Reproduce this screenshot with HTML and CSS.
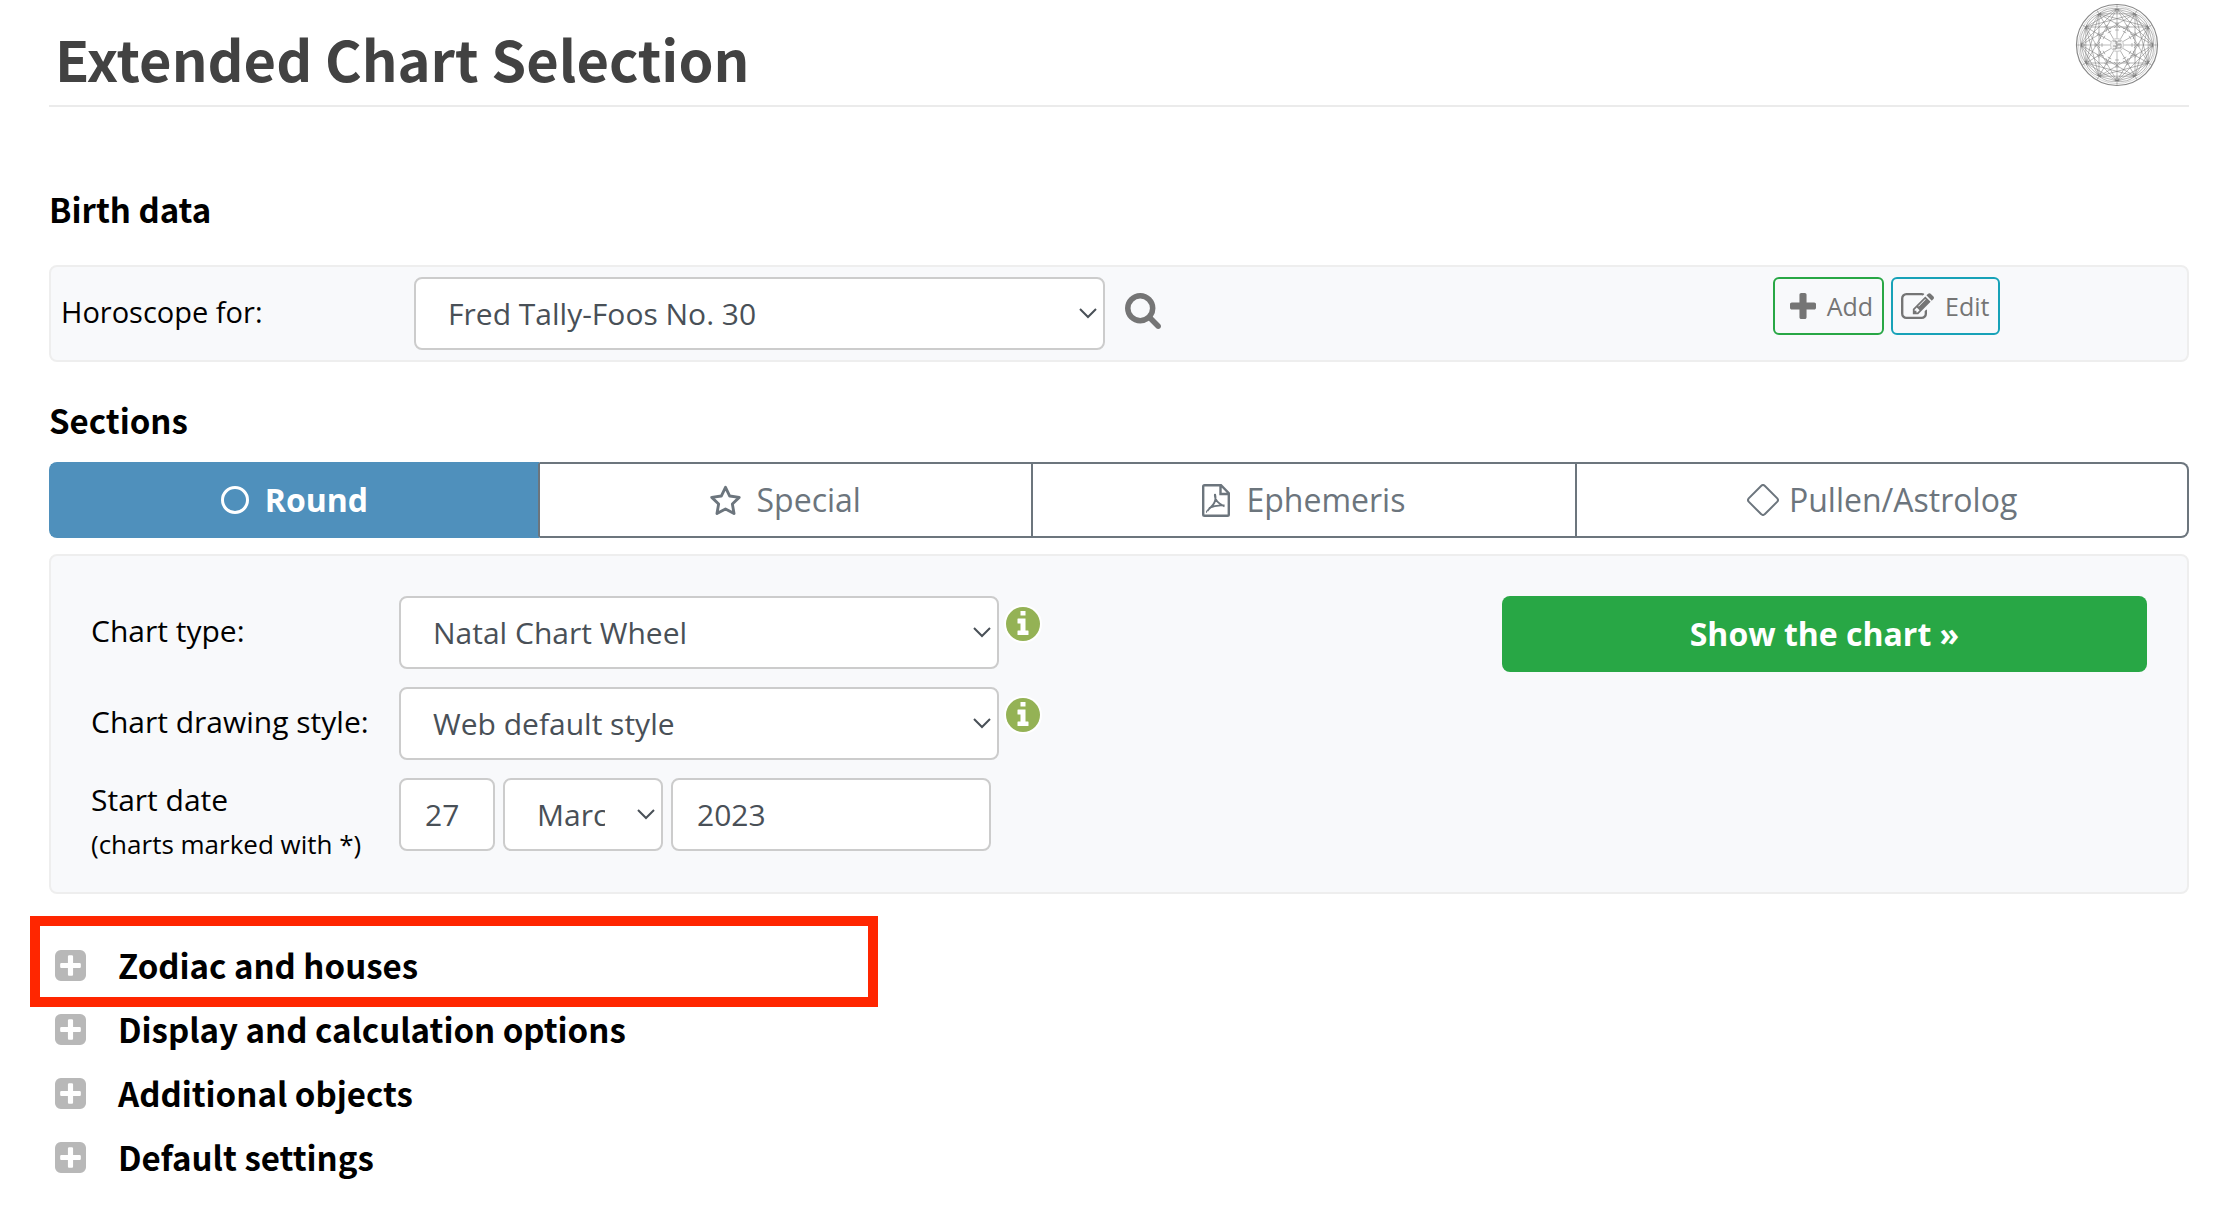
FILE: index.html
```html
<!DOCTYPE html>
<html lang="en">
<head>
<meta charset="utf-8">
<meta name="viewport" content="width=device-width, initial-scale=1">
<title>Extended Chart Selection</title>
<link rel="stylesheet" href="styles.css">
</head>
<body>
<svg class="sprite" aria-hidden="true">
  <symbol id="chevron" viewBox="0 0 18 11"><path d="M1 1l8 8 8-8" fill="none" stroke="currentColor" stroke-width="2"/></symbol>
  <symbol id="info" viewBox="0 0 38 38">
    <circle cx="19" cy="19" r="19" fill="#fff"/>
    <circle cx="19" cy="19" r="17" fill="#94b255"/>
    <path fill="#fff" d="M16.500 6h5v4.500h-5zM13.500 13.500h8v12h2.500q.5 0 .5.500v3.500q0 .5-.5.500h-10q-.5 0-.5-.5v-3.500q0-.5.5-.5h2.500v-7h-2.500q-.5 0-.5-.5v-4q0-.5.5-.5z"/>
  </symbol>
  <symbol id="plus-square" viewBox="0 0 1536 1536"><path fill="currentColor" d="M1280 832V704q0-26-19-45t-45-19H896V320q0-26-19-45t-45-19H704q-26 0-45 19t-19 45v320H320q-26 0-45 19t-19 45v128q0 26 19 45t45 19h320v320q0 26 19 45t45 19h128q26 0 45-19t19-45V896h320q26 0 45-19t19-45zm256-544v960q0 119-84.500 203.500T1248 1536H288q-119 0-203.500-84.500T0 1248V288Q0 169 84.500 84.500T288 0h960q119 0 203.500 84.500T1536 288z"/></symbol>
</svg>
<main class="page">
  <header class="page-header">
    <h1 class="page-title">Extended Chart Selection</h1>
    <svg class="logo" viewBox="-42 -42 84 84" fill="none" stroke="#777" stroke-width=".5" role="img" aria-label="Horoscope wheel">
      <defs>
        <g id="spoke">
          <path d="M0-40V-7M0-36L31.200 18M0-36L36 0M0-36L31.200-18M0-36L18-31.200M0-36Q10-38 18-31.200M-2-37L0-32 2-37M-2-22h4M-2-15h4M0-20l3 3M0-20l-3 3"/>
        </g>
      </defs>
      <circle r="40.500" stroke="#888" stroke-width="1.200"/>
      <circle r="38.500" stroke="#aaa"/>
      <use href="#spoke"/><use href="#spoke" transform="rotate(30)"/><use href="#spoke" transform="rotate(60)"/><use href="#spoke" transform="rotate(90)"/><use href="#spoke" transform="rotate(120)"/><use href="#spoke" transform="rotate(150)"/><use href="#spoke" transform="rotate(180)"/><use href="#spoke" transform="rotate(210)"/><use href="#spoke" transform="rotate(240)"/><use href="#spoke" transform="rotate(270)"/><use href="#spoke" transform="rotate(300)"/><use href="#spoke" transform="rotate(330)"/>
      <circle r="6.500" fill="#f2f2f2" stroke="#999"/>
      <path d="M-4-4h3v3M1-4h3M1-1h3v4H1M-4 1h3v3h-3M-1 0h4M0-4v8" stroke="#777" stroke-width=".7"/>
    </svg>
  </header>

  <h2 class="heading">Birth data</h2>
  <section class="panel birth">
    <label class="birth-label" for="person">Horoscope for:</label>
    <div class="birth-person">
      <span class="select-box person">
        <select class="control" id="person"><option>Fred Tally-Foos No. 30</option></select>
        <svg class="chevron"><use href="#chevron"/></svg>
      </span>
      <button class="search" type="button" aria-label="Search">
        <svg class="search-icon" viewBox="0 0 1664 1664"><path fill="currentColor" d="M1152 704q0-185-131.500-316.500T704 256 387.500 387.500 256 704t131.500 316.500T704 1152t316.500-131.500T1152 704zm512 832q0 52-38 90t-90 38q-54 0-90-38l-343-342q-179 124-399 124-143 0-273.500-55.500t-225-150-150-225T0 704t55.500-273.500 150-225 225-150T704 0t273.500 55.500 225 150 150 225T1408 704q0 220-124 399l343 343q37 37 37 90z"/></svg>
      </button>
    </div>
    <div class="birth-actions">
      <button class="small-button add" type="button"><svg class="plus-icon" viewBox="0 0 1408 1408"><path fill="currentColor" d="M1408 608v192q0 40-28 68t-68 28H896v416q0 40-28 68t-68 28H608q-40 0-68-28t-28-68V896H96q-40 0-68-28t-28-68V608q0-40 28-68t68-28h416V96q0-40 28-68t68-28h192q40 0 68 28t28 68v416h416q40 0 68 28t28 68z"/></svg>Add</button>
      <button class="small-button edit" type="button"><svg class="edit-icon" viewBox="0 0 1784 1408"><path fill="currentColor" d="M888 1056l116-116-152-152-116 116v56h96v96h56zm440-720q-16-16-33 1L945 687q-17 17-1 33t33-1l350-350q17-17 1-33zm80 594v190q0 119-84.500 203.500T1120 1408H288q-119 0-203.500-84.500T0 1120V288Q0 169 84.500 84.500T288 0h832q63 0 117 25 15 7 18 23 3 17-9 29l-49 49q-14 14-32 8-23-6-45-6H288q-66 0-113 47t-47 113v832q0 66 47 113t113 47h832q66 0 113-47t47-113V994q0-13 9-22l64-64q15-15 35-7t20 29zm-96-738l288 288-672 672H640V864zm444 132l-92 92-288-288 92-92q28-28 68-28t68 28l152 152q28 28 28 68t-28 68z"/></svg>Edit</button>
    </div>
  </section>

  <h2 class="heading">Sections</h2>
  <nav class="tabs">
    <button class="tab active" type="button"><svg class="tab-icon" viewBox="0 0 28 28"><circle cx="14" cy="14" r="12.500" fill="none" stroke="currentColor" stroke-width="3"/></svg>Round</button>
    <button class="tab" type="button"><svg class="tab-icon star" viewBox="1 1 28 27"><path d="M15 3l3.800 7.900 8.600 1.200-6.200 6 1.500 8.600L15 22.600l-7.700 4.100 1.500-8.600-6.200-6 8.600-1.200z" fill="none" stroke="currentColor" stroke-width="2.600" stroke-linejoin="round"/></svg>Special</button>
    <button class="tab" type="button"><svg class="tab-icon pdf" viewBox="0 0 28 33"><path d="M2.500 1.200h16.500l7.800 8v21.300q0 1.300-1.300 1.300h-23q-1.300 0-1.300-1.300v-28q0-1.300 1.300-1.300zM18.500 1.500v8.500h8" fill="none" stroke="currentColor" stroke-width="2.400"/><path d="M13 10q-1.500 7 9.500 12.500M13 10q2 7-3.500 12.500T5 28M7 24q7-3.500 15.500-2.500" fill="none" stroke="currentColor" stroke-width="1.800"/></svg>Ephemeris</button>
    <button class="tab" type="button"><svg class="tab-icon diamond" viewBox="0 0 32 32"><path d="M14.300 1.700q1.700-1.400 3.400 0l12.600 12.600q1.400 1.700 0 3.400L17.700 30.300q-1.700 1.400-3.400 0L1.700 17.700q-1.400-1.700 0-3.400z" fill="none" stroke="currentColor" stroke-width="2"/></svg>Pullen/Astrolog</button>
  </nav>

  <form class="panel chart-form">
    <div class="fields">
      <label for="type">Chart type:</label>
      <div class="field">
        <span class="select-box wide"><select class="control" id="type"><option>Natal Chart Wheel</option></select><svg class="chevron"><use href="#chevron"/></svg></span>
        <button class="info" type="button" aria-label="About chart types"><svg class="info-icon"><use href="#info"/></svg></button>
      </div>
      <label for="style">Chart drawing style:</label>
      <div class="field">
        <span class="select-box wide"><select class="control" id="style"><option>Web default style</option></select><svg class="chevron"><use href="#chevron"/></svg></span>
        <button class="info" type="button" aria-label="About drawing styles"><svg class="info-icon"><use href="#info"/></svg></button>
      </div>
      <label class="date-label" for="day">Start date<small class="note">(charts marked with *)</small></label>
      <div class="field date">
        <input class="control day" id="day" type="text" value="27">
        <span class="select-box month"><select class="control" aria-label="Month"><option>March</option></select><svg class="chevron"><use href="#chevron"/></svg></span>
        <input class="control year" type="text" value="2023" aria-label="Year">
      </div>
    </div>
    <button class="submit" type="submit">Show the chart »</button>
  </form>

  <div class="options">
    <h2 class="option highlighted"><button class="option-button" type="button"><svg class="option-icon"><use href="#plus-square"/></svg>Zodiac and houses</button></h2>
    <h2 class="option"><button class="option-button" type="button"><svg class="option-icon"><use href="#plus-square"/></svg>Display and calculation options</button></h2>
    <h2 class="option"><button class="option-button" type="button"><svg class="option-icon"><use href="#plus-square"/></svg>Additional objects</button></h2>
    <h2 class="option"><button class="option-button" type="button"><svg class="option-icon"><use href="#plus-square"/></svg>Default settings</button></h2>
  </div>
</main>
</body>
</html>
```
FILE: styles.css
```css
*,
*::after {
  box-sizing: border-box;
}

body {
  margin: 0;
  background: #fff;
  color: #000;
  font: 30px/44px "Open Sans", sans-serif;
}

button,
select,
input {
  margin: 0;
  font: inherit;
}

button {
  padding: 0;
  border: 0;
  background: none;
  color: inherit;
  cursor: pointer;
}

svg {
  display: block;
  flex: none;
}

.sprite {
  position: absolute;
  width: 0;
  height: 0;
}

.page {
  padding: 0 25px 20px 49px;
}

.page-header {
  display: flex;
  justify-content: space-between;
  align-items: flex-start;
  height: 107px;
  padding: 3px 30px 0 6px;
  border-bottom: 2px solid #ebebeb;
}

.page-title,
.heading,
.option {
  margin: 0;
  font-family: "Noto Sans CJK SC", sans-serif;
  font-weight: 700;
}

.page-title {
  padding-top: 15px;
  color: #424242;
  font-size: 56px;
  line-height: 80px;
}

.logo {
  width: 84px;
  height: 84px;
}

.heading {
  font-size: 33px;
  line-height: 48px;
}

.page-header + .heading {
  padding: 78px 0 32px;
}

.panel {
  border: 2px solid #eee;
  border-radius: 8px;
  background: #f8f9fb;
}

.birth {
  display: grid;
  grid-template-columns: 17% 1fr 19.4%;
  padding: 10px 0;
}

.birth-label {
  padding: 13px 0 0 10px;
  font-size: 29px;
}

.birth-person {
  display: flex;
  gap: 20px;
}

.select-box {
  position: relative;
  display: block;
}

.control {
  display: block;
  width: 100%;
  height: 73px;
  padding: 0 24px;
  border: 2px solid #ccc;
  border-radius: 8px;
  background: #fff;
  color: #495057;
  font-size: 30px;
  appearance: none;
}

select.control {
  padding: 0 56px 0 32px;
}

.chevron {
  position: absolute;
  top: 31px;
  right: 8px;
  width: 18px;
  height: 11px;
  color: #495057;
  pointer-events: none;
}

.person {
  width: 691px;
}

.search {
  align-self: flex-start;
  padding-top: 16px;
  color: #757575;
}

.search-icon {
  width: 36px;
  height: 36px;
}

.birth-actions {
  display: flex;
  align-items: flex-start;
  gap: 7px;
}

.small-button {
  display: flex;
  align-items: center;
  height: 58px;
  padding: 0 9px;
  border: 2px solid #28a745;
  border-radius: 6px;
  color: #757575;
  font-size: 25px;
}

.add {
  gap: 11px;
  padding-left: 15px;
}

.edit {
  gap: 11px;
  padding-left: 8px;
  border-color: #17a2b8;
}

.plus-icon {
  width: 26px;
  height: 26px;
}

.edit-icon {
  width: 33px;
  height: 26px;
}

.panel + .heading {
  padding: 34px 0 18px;
}

.tabs {
  display: flex;
  margin-bottom: 16px;
}

.tab {
  display: flex;
  flex: 1 1 auto;
  justify-content: center;
  align-items: center;
  gap: 16px;
  height: 76px;
  border: 2px solid #6c757d;
  border-left: 0;
  color: #6c757d;
  font-size: 32px;
}

.tab:last-child {
  gap: 10px;
  border-radius: 0 8px 8px 0;
}

.tab.active {
  border-left: 2px solid;
  border-color: #4f90bc;
  border-right-color: #6c757d;
  border-radius: 8px 0 0 8px;
  background: #4f90bc;
  color: #fff;
  font-weight: 700;
}

.tab-icon {
  width: 28px;
  height: 28px;
}

.tab-icon.star {
  width: 31px;
  height: 30px;
}

.tab-icon.pdf {
  height: 33px;
}

.tab-icon.diamond {
  width: 32px;
  height: 32px;
}

.chart-form {
  display: flex;
  justify-content: space-between;
  align-items: flex-start;
  padding: 40px 40px 26px;
}

.fields {
  display: grid;
  grid-template-columns: 308px auto;
  row-gap: 18px;
}

.fields label {
  padding-top: 13px;
}

.field {
  display: flex;
  align-items: flex-start;
  gap: 5px;
}

.wide {
  width: 600px;
}

.info {
  padding-top: 9px;
}

.info-icon {
  width: 38px;
  height: 38px;
}

.fields .date-label {
  padding-top: 0;
}

.note {
  display: block;
  font-size: 26px;
}

.date {
  gap: 8px;
}

.day {
  width: 96px;
}

.month {
  width: 160px;
}

.year {
  width: 320px;
}

.submit {
  width: 645px;
  height: 76px;
  border-radius: 8px;
  background: #28a745;
  color: #fff;
  font-size: 32px;
  font-weight: 700;
}

.options {
  padding: 39px 0 0 6px;
}

.option {
  position: relative;
  font-size: 33px;
  line-height: 64px;
}

.option-button {
  display: flex;
  align-items: center;
  gap: 32px;
}

.option-icon {
  width: 31px;
  height: 31px;
  color: #b8b8b8;
}

.highlighted::after {
  content: "";
  position: absolute;
  top: -17px;
  left: -25px;
  width: 848px;
  height: 91px;
  border: 10px solid #ff2600;
  pointer-events: none;
}
```
